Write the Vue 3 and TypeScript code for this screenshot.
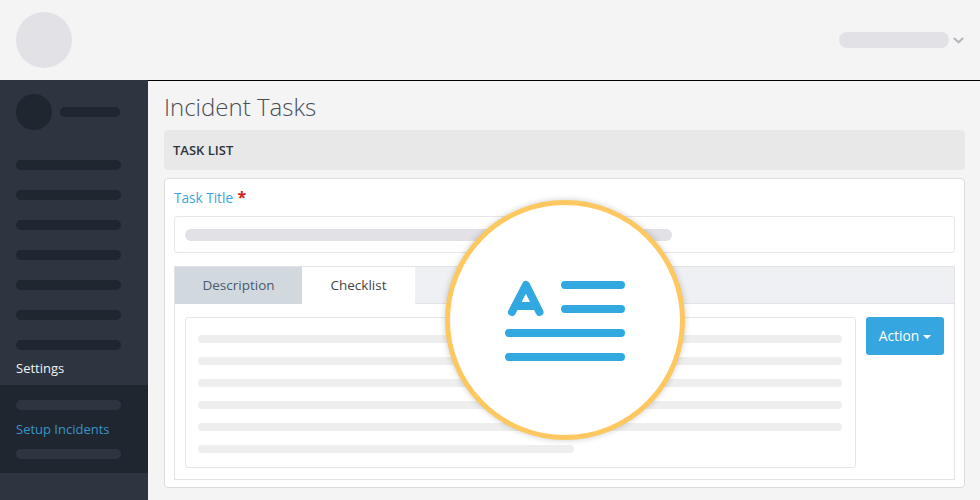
<script setup lang="ts">
const navBars: number[] = [1, 2, 3, 4, 5, 6, 7]
const lines: { id: number; short: boolean }[] = [
  { id: 1, short: false },
  { id: 2, short: false },
  { id: 3, short: false },
  { id: 4, short: false },
  { id: 5, short: false },
  { id: 6, short: true },
]
</script>

<template>
  <div class="page">
    <header class="topbar">
      <div class="logo"></div>
      <div class="user">
        <div class="user-pill"></div>
        <svg class="chevron" width="11" height="7" viewBox="0 0 11 7">
          <path d="M.8 1l4.7 4.3L10.2 1" fill="none" stroke="#b5b5ba" stroke-width="2" />
        </svg>
      </div>
    </header>
    <div class="body">
      <aside class="sidebar">
        <div class="profile">
          <div class="avatar"></div>
          <div class="name"></div>
        </div>
        <div class="nav">
          <div v-for="n in navBars" :key="n" class="nav-bar"></div>
        </div>
        <div class="settings">Settings</div>
        <div class="submenu">
          <div class="sub-bar"></div>
          <div class="sub-link">Setup Incidents</div>
          <div class="sub-bar"></div>
        </div>
      </aside>
      <main class="main">
        <h1 class="title">Incident Tasks</h1>
        <div class="section">TASK LIST</div>
        <section class="card">
          <label class="label">Task Title <span class="req">*</span></label>
          <div class="input"><div class="input-pill"></div></div>
          <div class="tabs">
            <div class="tabbar">
              <div class="tab tab-desc">Description</div>
              <div class="tab tab-check">Checklist</div>
            </div>
            <div class="tab-body">
              <div class="editor">
                <div v-for="l in lines" :key="l.id" class="line" :class="{ short: l.short }"></div>
              </div>
              <button class="action" type="button">Action<span class="caret"></span></button>
            </div>
          </div>
        </section>
      </main>
    </div>
    <div class="badge">
      <svg width="120" height="80" viewBox="0 0 120 80" fill="none" stroke="#31a8e0" stroke-width="8" stroke-linecap="round" stroke-linejoin="round">
        <path d="M7 31 21 4 34.500 31M11 25H31" />
        <path d="M60 4h56M60 28h56M4 52h112M4 76h112" />
      </svg>
    </div>
  </div>
</template>

<style>
html, body { margin: 0; background: #f4f4f4; }
</style>

<style scoped>
.page {
  position: relative;
  width: 980px;
  height: 500px;
  overflow: hidden;
  background: #f4f4f4;
  font-family: "Open Sans", "Liberation Sans", sans-serif;
}
.topbar {
  height: 80px;
  box-sizing: border-box;
  padding: 12px 16px;
  display: flex;
  justify-content: space-between;
  align-items: flex-start;
}
.logo {
  width: 56px;
  height: 56px;
  border-radius: 50%;
  background: #e1e1e6;
}
.user {
  display: flex;
  align-items: center;
  gap: 4px;
  margin-top: 20px;
}
.user-pill {
  width: 110px;
  height: 16px;
  border-radius: 8px;
  background: #e1e1e6;
}
.chevron { margin-top: 1px; }
.body {
  display: flex;
  height: 420px;
}
.sidebar {
  width: 148px;
  flex: none;
  background: #2d3540;
  display: flex;
  flex-direction: column;
}
.profile {
  display: flex;
  align-items: center;
  gap: 8px;
  padding: 14px 0 0 16px;
}
.avatar {
  width: 36px;
  height: 36px;
  border-radius: 50%;
  background: #1f2630;
}
.name {
  width: 60px;
  height: 10px;
  border-radius: 5px;
  background: #1f2630;
}
.nav {
  display: flex;
  flex-direction: column;
  gap: 20px;
  padding: 30px 0 0 16px;
}
.nav-bar {
  width: 105px;
  height: 10px;
  border-radius: 5px;
  background: #1f2630;
}
.settings {
  margin: 9px 0 0 16px;
  height: 18px;
  line-height: 18px;
  font-size: 13px;
  color: #f2f2f2;
}
.submenu {
  margin-top: 8px;
  height: 88px;
  box-sizing: border-box;
  padding: 15px 0 0 16px;
  background: #1f2630;
}
.sub-bar {
  width: 105px;
  height: 10px;
  border-radius: 5px;
  background: #2d3540;
}
.sub-link {
  margin: 10px 0 10px;
  height: 19px;
  line-height: 19px;
  font-size: 13px;
  color: #3a94c9;
}
.main {
  flex: 1;
  box-sizing: border-box;
  border-top: 1px solid #000;
  padding: 0 16px;
}
.title {
  margin: 11px 0 0;
  height: 38px;
  line-height: 30px;
  font-size: 24px;
  font-weight: 300;
  color: #4a4f57;
}
.section {
  height: 40px;
  box-sizing: border-box;
  padding: 1px 0 0 9px;
  line-height: 39px;
  font-size: 13px;
  font-weight: 600;
  color: #2d3540;
  background: #e8e8e8;
  border-radius: 4px;
}
.card {
  margin-top: 8px;
  height: 310px;
  box-sizing: border-box;
  padding: 9px;
  background: #fff;
  border: 1px solid #dcdcdc;
  border-radius: 4px;
}
.label {
  display: block;
  height: 20px;
  line-height: 18px;
  font-size: 13.600px;
  color: #3aa5dc;
}
.req {
  margin-left: 1px;
  color: #cc1b1b;
  font-weight: 700;
  font-size: 16px;
}
.input {
  margin-top: 8px;
  height: 37px;
  box-sizing: border-box;
  padding: 12px 10px;
  border: 1px solid #e6e6ec;
  border-radius: 3px;
}
.input-pill {
  width: 487px;
  height: 12px;
  border-radius: 6px;
  background: #e1e1e6;
}
.tabs {
  margin-top: 13px;
  height: 214px;
  box-sizing: border-box;
  border: 1px solid #e2e2e8;
  display: flex;
  flex-direction: column;
}
.tabbar {
  height: 37px;
  flex: none;
  box-sizing: border-box;
  display: flex;
  background: #eef0f4;
  border-bottom: 1px solid #e2e2e8;
}
.tab {
  height: 37px;
  line-height: 37px;
  text-align: center;
  font-size: 13.500px;
}
.tab-desc {
  width: 127px;
  background: #d1d9df;
  color: #4b5a6b;
}
.tab-check {
  width: 113px;
  background: #fff;
  color: #444;
}
.tab-body {
  flex: 1;
  display: flex;
  gap: 10px;
  padding: 13px 10px 11px;
}
.editor {
  width: 671px;
  height: 151px;
  box-sizing: border-box;
  padding: 17px 13px 0 12px;
  border: 1px solid #e6e6ea;
  border-radius: 3px;
  display: flex;
  flex-direction: column;
  gap: 14px;
}
.line {
  height: 8px;
  flex: none;
  border-radius: 4px;
  background: #eeeeee;
}
.line.short { width: 376px; }
.action {
  width: 78px;
  height: 38px;
  padding: 0 0 1px;
  border: none;
  border-radius: 3px;
  background: #36a6e0;
  color: #fff;
  font: 13.800px "Open Sans", "Liberation Sans", sans-serif;
}
.caret {
  display: inline-block;
  margin-left: 4px;
  vertical-align: middle;
  border-top: 4px solid #fff;
  border-left: 4px solid transparent;
  border-right: 4px solid transparent;
}
.badge {
  position: absolute;
  left: 445px;
  top: 200px;
  width: 240px;
  height: 240px;
  box-sizing: border-box;
  border: 5px solid #fdc85f;
  border-radius: 50%;
  background: #fff;
  box-shadow: 0 0 6px rgba(0, 0, 0, 0.2);
}
.badge svg {
  position: absolute;
  left: 55px;
  top: 76px;
  overflow: visible;
}
</style>
